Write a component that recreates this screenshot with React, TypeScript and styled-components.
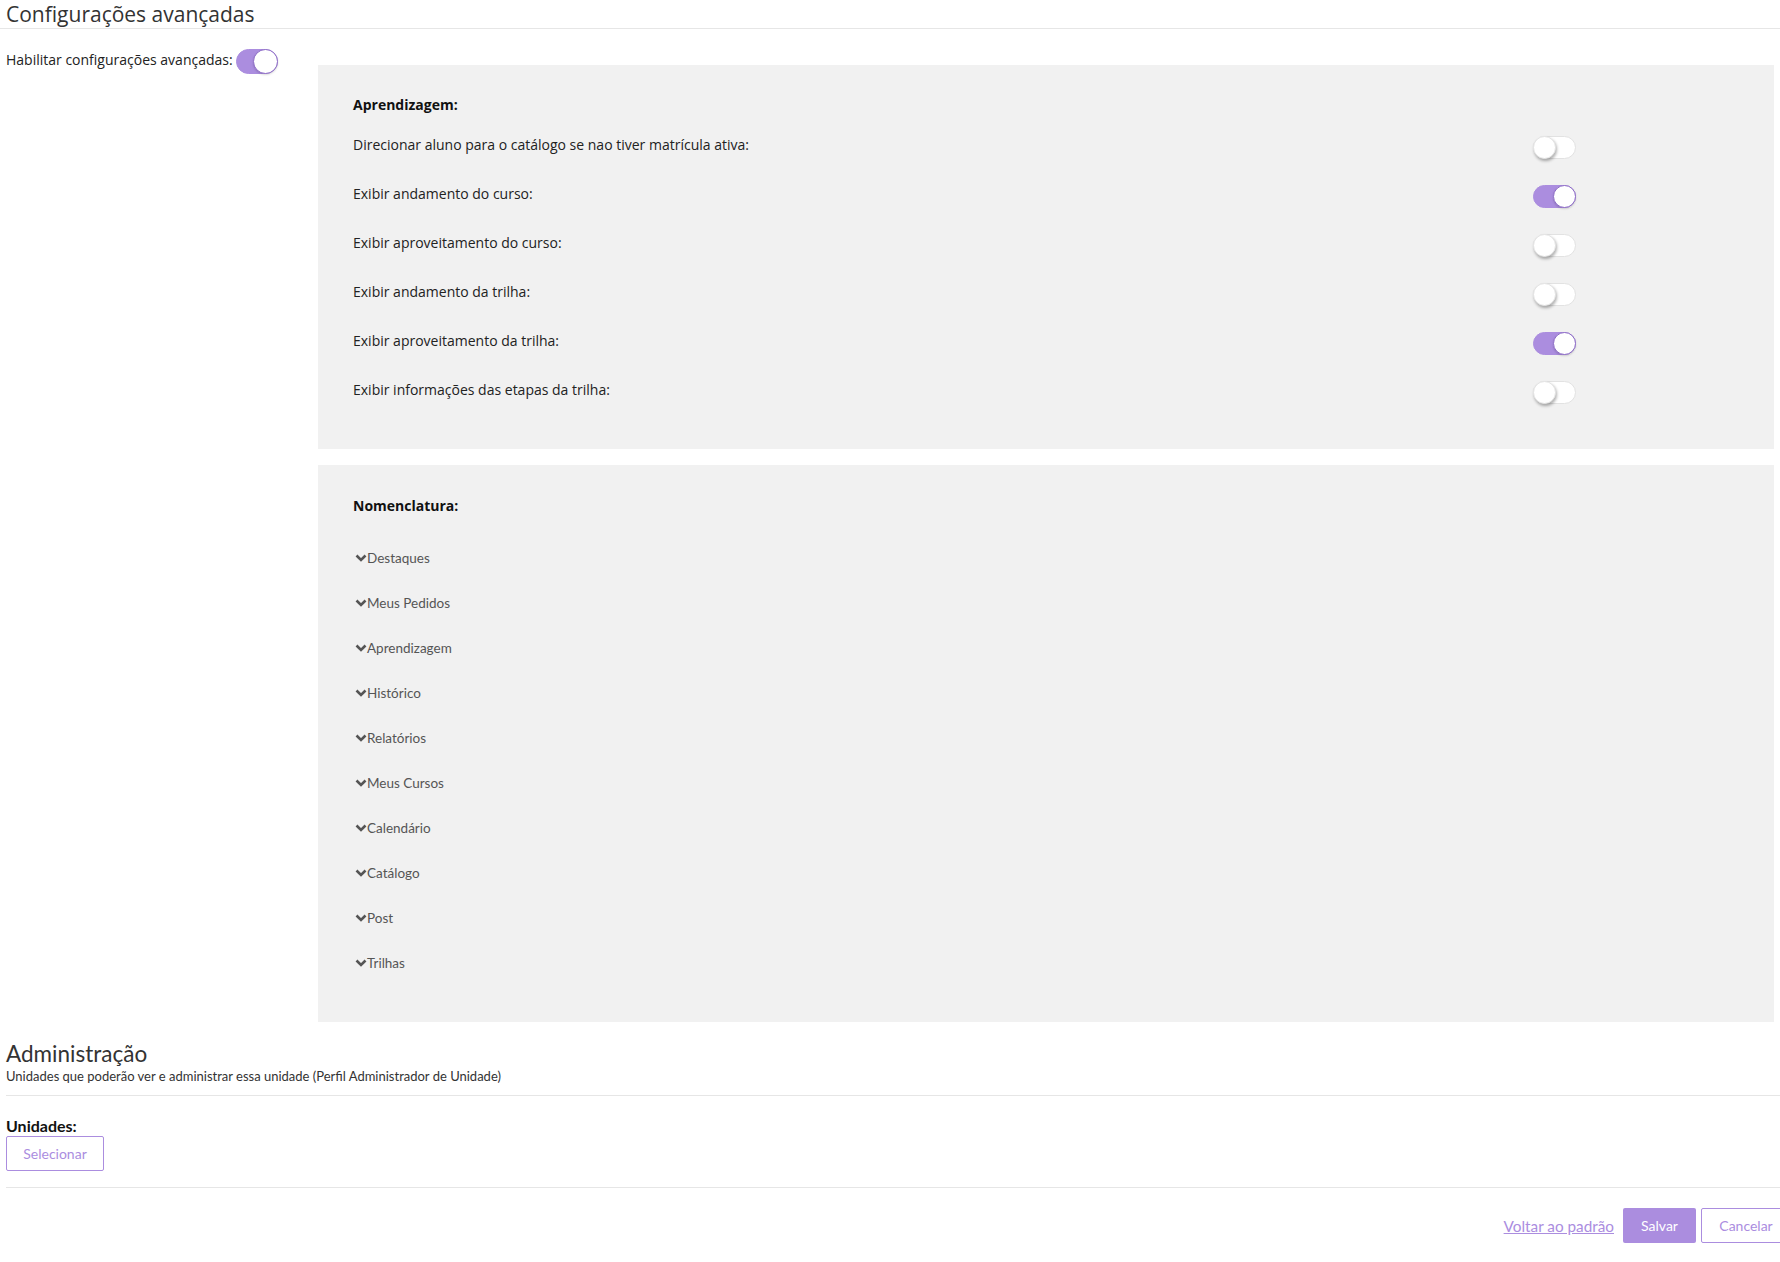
import React from "react";
import styled, { createGlobalStyle } from "styled-components";

const purple = "#ab8ddf";

const GlobalStyle = createGlobalStyle`
  html, body {
    margin: 0;
    padding: 0;
    background: #fff;
    overflow-x: hidden;
  }
  body {
    font-family: "Open Sans", "Liberation Sans", sans-serif;
    color: #222;
  }
`;

const Page = styled.div`
  width: 1780px;
  padding-left: 6px;
  box-sizing: border-box;
`;

const Title = styled.h1`
  margin: 0;
  font-weight: 400;
  font-size: 21px;
  line-height: 28px;
  color: #333;
  border-bottom: 1px solid #e6e6e6;
  margin-left: -6px;
  padding-left: 6px;
`;

const Settings = styled.div`
  display: grid;
  grid-template-columns: 318px 1fr;
  margin-top: 16px;
  margin-left: -6px;
`;

const EnableRow = styled.label`
  display: flex;
  align-items: center;
  gap: 3px;
  align-self: start;
  padding-left: 6px;
  font-size: 14px;
  color: #222;
`;

const Panels = styled.div`
  display: flex;
  flex-direction: column;
  gap: 16px;
  padding-top: 20px;
  margin-right: 6px;
`;

const Panel = styled.section<{ $top: number; $bottom: number }>`
  background: #f1f1f1;
  padding: ${(p) => p.$top}px 0 ${(p) => p.$bottom}px 35px;
`;

const PanelHeading = styled.div`
  font-weight: 700;
  font-size: 14px;
  line-height: 20px;
  color: #111;
`;

const OptionList = styled.div`
  margin-top: 5px;
`;

const OptionRow = styled.div`
  display: grid;
  grid-template-columns: 1180px 44px;
  align-items: center;
  height: 49px;
  font-size: 14px;
  color: #222;
`;

const Track = styled.span<{ $on: boolean; $big?: boolean }>`
  position: relative;
  display: inline-block;
  box-sizing: border-box;
  width: ${(p) => (p.$big ? 42 : 43)}px;
  height: ${(p) => (p.$big ? 25 : 23)}px;
  border-radius: 13px;
  background: ${(p) => (p.$on ? purple : "#fff")};
  border: 1px solid ${(p) => (p.$on ? purple : "#e2e2e2")};
  margin-top: ${(p) => (p.$big ? 4 : 6)}px;
`;

const Knob = styled.span<{ $on: boolean; $big?: boolean }>`
  position: absolute;
  top: -1px;
  ${(p) => (p.$on ? "right: -1px;" : "left: -1px;")}
  width: ${(p) => (p.$big ? 25 : 23)}px;
  height: ${(p) => (p.$big ? 25 : 23)}px;
  box-sizing: border-box;
  border-radius: 50%;
  background: #fff;
  border: 1px solid ${(p) => (p.$on ? "#8e6cc8" : "#e4e4e4")};
  box-shadow: ${(p) =>
    p.$on ? "0 1px 2px rgba(0,0,0,0.15)" : "1px 2px 3px rgba(0,0,0,0.3)"};
`;

const Toggle: React.FC<{ on: boolean; big?: boolean }> = ({ on, big }) => (
  <Track $on={on} $big={big}>
    <Knob $on={on} $big={big} />
  </Track>
);

const NameList = styled.div`
  margin-top: 19px;
`;

const NameItem = styled.div`
  display: flex;
  align-items: center;
  height: 45px;
  font-family: Lato, "Open Sans", sans-serif;
  font-size: 13.5px;
  color: #555;
`;

const Chevron = styled.svg`
  width: 12px;
  height: 10px;
  margin-left: 2px;
  flex: none;
`;

const AdminTitle = styled.h2`
  margin: 18px 0 0;
  font-family: Lato, "Open Sans", sans-serif;
  font-weight: 400;
  font-size: 22.5px;
  line-height: 28px;
  color: #333;
`;

const AdminSub = styled.div`
  font-family: Lato, "Open Sans", sans-serif;
  font-size: 13px;
  line-height: 17px;
  color: #333;
  padding-bottom: 10px;
  border-bottom: 1px solid #e6e6e6;
`;

const FieldLabel = styled.div`
  margin-top: 21px;
  font-family: Lato, "Open Sans", sans-serif;
  font-weight: 700;
  font-size: 16px;
  line-height: 17px;
  color: #111;
`;

const OutlineButton = styled.button<{ $w: number }>`
  box-sizing: border-box;
  width: ${(p) => p.$w}px;
  height: 35px;
  background: #fff;
  border: 1px solid ${purple};
  border-radius: 2px;
  color: ${purple};
  font-family: Lato, "Open Sans", sans-serif;
  font-size: 14px;
  padding: 0;
  cursor: pointer;
`;

const UnitsBlock = styled.div`
  padding-bottom: 16px;
  border-bottom: 1px solid #e6e6e6;
  & > button {
    margin-top: 2px;
  }
`;

const Footer = styled.div`
  display: flex;
  justify-content: flex-end;
  align-items: center;
  margin-top: 20px;
  margin-right: -11px;
  padding-bottom: 20px;
  & > button:last-child {
    margin-left: 5px;
  }
`;

const ResetLink = styled.a`
  font-family: Lato, "Open Sans", sans-serif;
  font-size: 15.3px;
  color: ${purple};
  text-decoration: underline;
  margin-right: 9px;
`;

const SaveButton = styled.button`
  width: 73px;
  height: 35px;
  border: none;
  border-radius: 2px;
  background: ${purple};
  color: #fff;
  font-family: Lato, "Open Sans", sans-serif;
  font-size: 14px;
  padding: 0;
`;

const learning = [
  { label: "Direcionar aluno para o catálogo se nao tiver matrícula ativa:", on: false },
  { label: "Exibir andamento do curso:", on: true },
  { label: "Exibir aproveitamento do curso:", on: false },
  { label: "Exibir andamento da trilha:", on: false },
  { label: "Exibir aproveitamento da trilha:", on: true },
  { label: "Exibir informações das etapas da trilha:", on: false },
];

const names = [
  "Destaques",
  "Meus Pedidos",
  "Aprendizagem",
  "Histórico",
  "Relatórios",
  "Meus Cursos",
  "Calendário",
  "Catálogo",
  "Post",
  "Trilhas",
];

export default function App() {
  return (
    <>
      <GlobalStyle />
      <Page>
        <Title>Configurações avançadas</Title>
        <Settings>
          <EnableRow>
            Habilitar configurações avançadas: <Toggle on big />
          </EnableRow>
          <Panels>
            <Panel $top={30} $bottom={35}>
              <PanelHeading>Aprendizagem:</PanelHeading>
              <OptionList>
                {learning.map((o) => (
                  <OptionRow key={o.label}>
                    <span>{o.label}</span>
                    <Toggle on={o.on} />
                  </OptionRow>
                ))}
              </OptionList>
            </Panel>
            <Panel $top={31} $bottom={37}>
              <PanelHeading>Nomenclatura:</PanelHeading>
              <NameList>
                {names.map((n) => (
                  <NameItem key={n}>
                    <Chevron viewBox="0 0 12 10">
                      <polyline
                        points="1.5,2.5 6,7 10.5,2.5"
                        fill="none"
                        stroke="#555"
                        strokeWidth="2.6"
                      />
                    </Chevron>
                    {n}
                  </NameItem>
                ))}
              </NameList>
            </Panel>
          </Panels>
        </Settings>
        <AdminTitle>Administração</AdminTitle>
        <AdminSub>
          Unidades que poderão ver e administrar essa unidade (Perfil Administrador de Unidade)
        </AdminSub>
        <UnitsBlock>
          <FieldLabel>Unidades:</FieldLabel>
          <OutlineButton $w={98}>Selecionar</OutlineButton>
        </UnitsBlock>
        <Footer>
          <ResetLink href="#">Voltar ao padrão</ResetLink>
          <SaveButton>Salvar</SaveButton>
          <OutlineButton $w={90}>Cancelar</OutlineButton>
        </Footer>
      </Page>
    </>
  );
}
